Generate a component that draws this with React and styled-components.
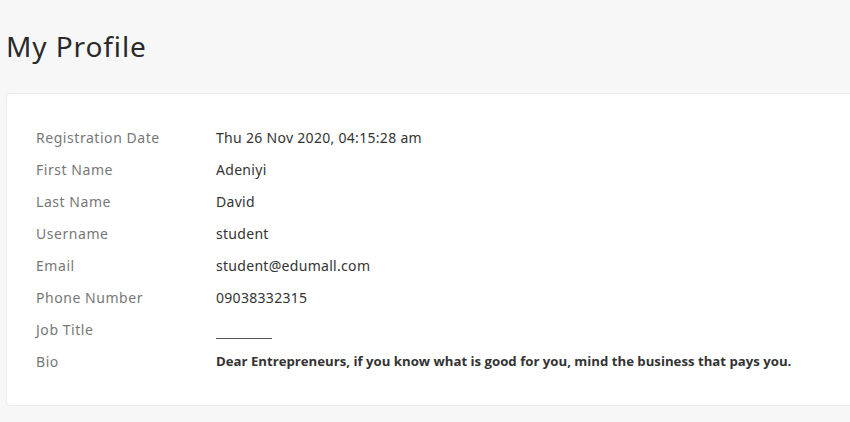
import React from "react";
import styled, { createGlobalStyle } from "styled-components";

const GlobalStyle = createGlobalStyle`
  body {
    margin: 0;
    background-color: #f7f7f7;
    font-family: "Noto Sans", "Open Sans", sans-serif;
    overflow: hidden;
  }
`;

const Page = styled.div`
  width: 850px;
  height: 422px;
  padding: 26px 0 0 6px;
  box-sizing: border-box;
`;

const Title = styled.h1`
  margin: 0 0 27px;
  font-size: 28px;
  line-height: 40px;
  font-weight: 400;
  letter-spacing: 0.9px;
  color: #2a2a2a;
`;

const Card = styled.section`
  width: 870px;
  padding: 27px 0 28px 29px;
  box-sizing: border-box;
  background-color: #fff;
  border: 1px solid #ececec;
  border-radius: 4px;
`;

const Row = styled.div`
  display: flex;
  align-items: center;
  height: 32px;
  font-size: 14px;
`;

const Label = styled.div`
  width: 180px;
  flex-shrink: 0;
  color: #777;
  letter-spacing: 0.55px;
`;

const Value = styled.div`
  color: #333;
  letter-spacing: ${(props) => (props.bold ? "0" : "0.3px")};
  font-family: ${(props) => (props.bold ? '"Open Sans", sans-serif' : "inherit")};
  font-weight: ${(props) => (props.bold ? 700 : 400)};
  font-size: ${(props) => (props.bold ? "13.2px" : "14px")};
`;

const Blank = styled.span`
  display: inline-block;
  width: 56px;
  border-bottom: 1px solid #555;
  transform: translateY(4px);
`;

const profile = [
  ["Registration Date", "Thu 26 Nov 2020, 04:15:28 am"],
  ["First Name", "Adeniyi"],
  ["Last Name", "David"],
  ["Username", "student"],
  ["Email", "student@edumall.com"],
  ["Phone Number", "09038332315"],
  ["Job Title", null],
];

const App = () => {
  return (
    <>
      <GlobalStyle />
      <Page>
        <Title>My Profile</Title>
        <Card>
          {profile.map(([label, value]) => (
            <Row key={label}>
              <Label>{label}</Label>
              <Value>{value === null ? <Blank /> : value}</Value>
            </Row>
          ))}
          <Row>
            <Label>Bio</Label>
            <Value bold>
              Dear Entrepreneurs, if you know what is good for you, mind the
              business that pays you.
            </Value>
          </Row>
        </Card>
      </Page>
    </>
  );
};

export default App;
